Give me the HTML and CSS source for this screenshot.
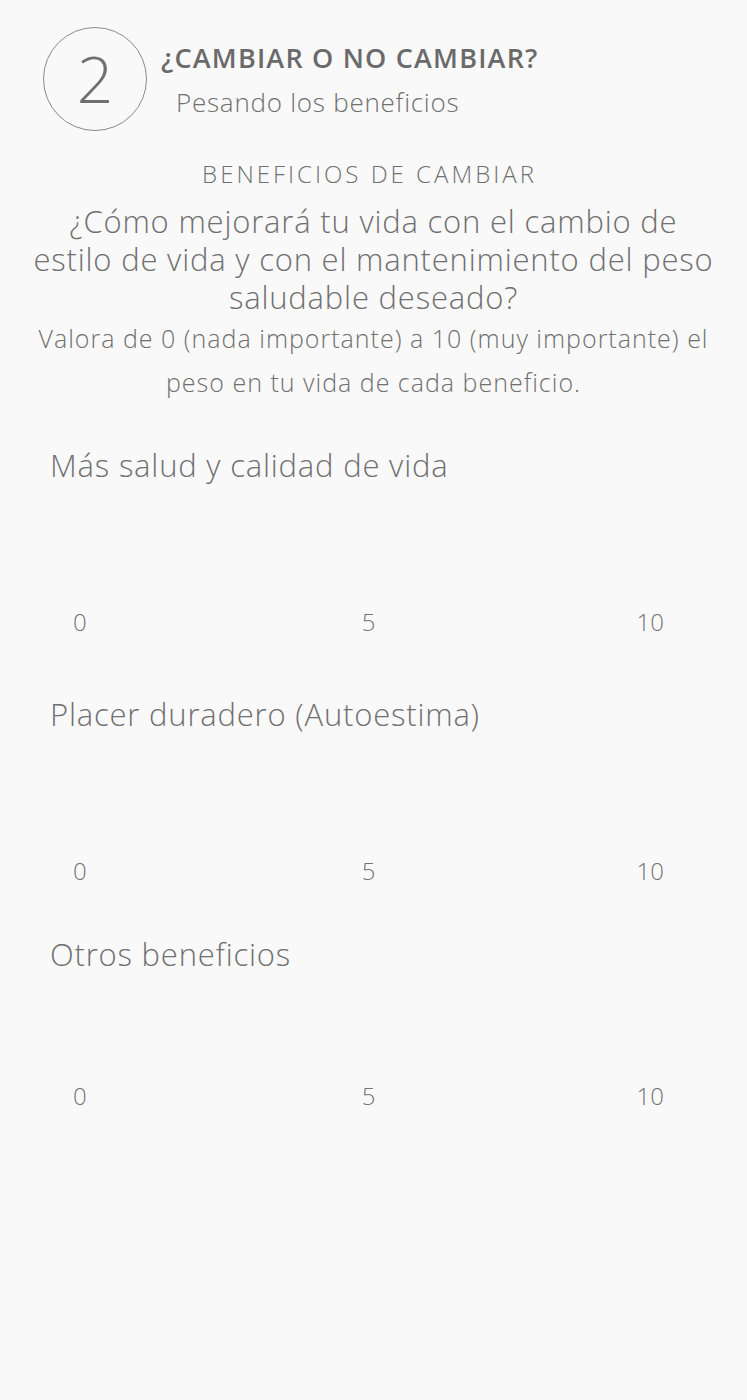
FILE: index.html
```html
<!DOCTYPE html>
<html lang="es">
<head>
<meta charset="utf-8">
<link rel="stylesheet" href="styles.css">
</head>
<body>
<div class="page">
  <header class="header">
    <div class="step">2</div>
    <div class="titles">
      <h1 class="title">¿CAMBIAR O NO CAMBIAR?</h1>
      <p class="subtitle">Pesando los beneficios</p>
    </div>
  </header>
  <section class="intro">
    <h2 class="section-title">BENEFICIOS DE CAMBIAR</h2>
    <p class="question">¿Cómo mejorará tu vida con el cambio de<br>estilo de vida y con el mantenimiento del peso saludable deseado?</p>
    <p class="instructions">Valora de 0 (nada importante) a 10 (muy importante) el peso en tu vida de cada beneficio.</p>
  </section>
  <section class="item item-1">
    <h3 class="item-label">Más salud y calidad de vida</h3>
    <div class="scale"><span>0</span><span>5</span><span>10</span></div>
  </section>
  <section class="item item-2">
    <h3 class="item-label">Placer duradero (Autoestima)</h3>
    <div class="scale"><span>0</span><span>5</span><span>10</span></div>
  </section>
  <section class="item item-3">
    <h3 class="item-label">Otros beneficios</h3>
    <div class="scale"><span>0</span><span>5</span><span>10</span></div>
  </section>
</div>
</body>
</html>
```

FILE: styles.css
```css
html, body {
  margin: 0;
  padding: 0;
  background: #f9f9f9;
}
body {
  font-family: "Open Sans", "Noto Sans", sans-serif;
  color: #707070;
  width: 747px;
  height: 1400px;
  overflow: hidden;
}
.page {
  display: flex;
  flex-direction: column;
}
.header {
  display: flex;
  align-items: flex-start;
  padding: 27px 0 0 43px;
}
.step {
  width: 102px;
  height: 102px;
  border: 1px solid #8a8a8a;
  border-radius: 50%;
  display: flex;
  align-items: center;
  justify-content: center;
  font-size: 64px;
  font-weight: 300;
  line-height: 1;
  color: #707070;
  flex-shrink: 0;
}
.titles {
  margin-left: 14px;
  padding-top: 13px;
}
.title {
  margin: 0;
  font-size: 27px;
  font-weight: 600;
  letter-spacing: 1.2px;
  line-height: 36px;
  color: #6a6a6a;
  white-space: nowrap;
}
.subtitle {
  margin: 10px 0 0 15px;
  font-size: 26px;
  font-weight: 300;
  letter-spacing: 0.75px;
  line-height: 32px;
}
.intro {
  text-align: center;
  padding: 27px 20px 0;
}
.section-title {
  margin: 0 8px 0 0;
  font-size: 24px;
  font-weight: 300;
  letter-spacing: 3px;
  line-height: 32px;
}
.question {
  margin: 12px 0 0;
  font-size: 31px;
  font-weight: 300;
  letter-spacing: 0.8px;
  line-height: 38px;
}
.instructions {
  margin: 0;
  font-size: 25px;
  font-weight: 300;
  letter-spacing: 1px;
  line-height: 44px;
}
.item-label {
  margin: 0;
  padding-left: 50px;
  font-size: 31px;
  font-weight: 300;
  letter-spacing: 0.8px;
  line-height: 38px;
}
.scale {
  display: grid;
  grid-template-columns: 1fr auto 1fr;
  padding: 0 83px 0 73px;
  font-size: 24px;
  font-weight: 300;
  line-height: 30px;
  color: #747474;
}
.scale span:first-child { justify-self: start; }
.scale span:last-child { justify-self: end; }
.item-1 { margin-top: 42px; }
.item-1 .scale { margin-top: 123px; }
.item-2 { margin-top: 58px; }
.item-2 .scale { margin-top: 123px; }
.item-3 { margin-top: 49px; }
.item-3 .scale { margin-top: 108px; }
```
